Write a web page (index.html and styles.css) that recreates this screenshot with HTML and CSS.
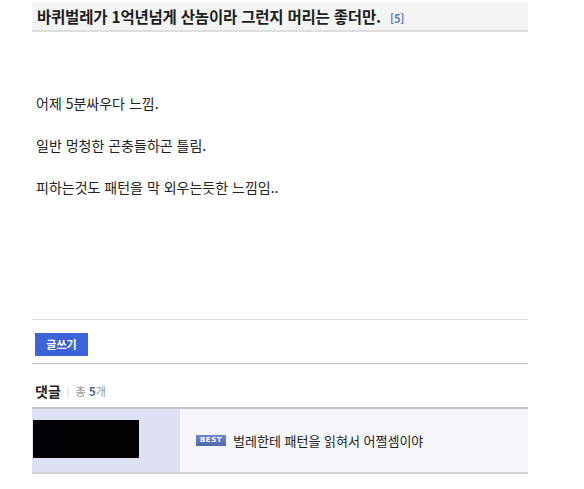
FILE: index.html
```html
<!DOCTYPE html>
<html lang="ko">
<head>
<meta charset="utf-8">
<link rel="stylesheet" href="styles.css">
</head>
<body>
<div class="wrap">
  <div class="title">바퀴벌레가 1억년넘게 산놈이라 그런지 머리는 좋더만. <span class="cnt">[5]</span></div>
  <div class="content">
    <p>어제 5분싸우다 느낌.</p>
    <p>일반 멍청한 곤충들하곤 틀림.</p>
    <p>피하는것도 패턴을 막 외우는듯한 느낌임..</p>
  </div>
  <div class="btnrow"><span class="btn">글쓰기</span></div>
  <div class="chead"><span class="clabel">댓글</span><span class="sep">|</span><span class="total">총 <b>5</b>개</span></div>
  <div class="comment">
    <div class="cleft"><div class="redact"></div></div>
    <div class="cright"><span class="best">BEST</span><span class="ctext">벌레한테 패턴을 읽혀서 어쩔셈이야</span></div>
  </div>
</div>
</body>
</html>
```
FILE: styles.css
```css
html, body {
  margin: 0;
  padding: 0;
  background: #fff;
}
body {
  font-family: "Noto Sans CJK KR", "Noto Sans", sans-serif;
  color: #222;
}
.wrap {
  width: 496px;
  margin-left: 32px;
  padding-top: 2px;
}
.title {
  height: 28px;
  line-height: 28px;
  background: #f3f4f4;
  border-bottom: 2px solid #dedede;
  padding-left: 5px;
  font-size: 15.5px;
  font-weight: bold;
  color: #1e1e1e;
  letter-spacing: -0.2px;
}
.cnt {
  font-size: 11px;
  color: #5a7db0;
  margin-left: 5px;
}
.content {
  height: 288px;
  box-sizing: border-box;
  padding: 63px 0 0 4px;
  border-bottom: 1px solid #dcdcdc;
  display: flex;
  flex-direction: column;
  gap: 26px;
}
.content p {
  margin: 0;
  font-size: 14px;
  line-height: 16px;
  color: #222;
}
.btnrow {
  height: 44px;
  box-sizing: border-box;
  padding: 10px 0 0 3px;
  border-bottom: 1px solid #b9b9b9;
}
.btn {
  display: inline-block;
  width: 53px;
  height: 23px;
  line-height: 23px;
  text-align: center;
  background: #3c64d8;
  color: #fff;
  font-size: 11px;
  font-weight: bold;
}
.chead {
  height: 43px;
  box-sizing: border-box;
  padding: 19px 0 0 3px;
  display: flex;
  align-items: flex-start;
  gap: 6px;
}
.clabel {
  font-size: 14px;
  font-weight: bold;
  color: #222;
  line-height: 16px;
}
.sep {
  font-size: 10px;
  color: #d0d0d0;
  line-height: 16px;
}
.total {
  font-size: 11px;
  color: #999;
  line-height: 16px;
}
.total b {
  color: #4d6b8c;
  font-size: 12px;
}
.comment {
  display: flex;
  height: 67px;
  box-sizing: border-box;
  border-top: 2px solid #c4c4c4;
  border-bottom: 2px solid #d4d4d4;
}
.cleft {
  width: 148px;
  background: #dee1f3;
  padding: 11px 0 0 1px;
  box-sizing: border-box;
}
.redact {
  width: 106px;
  height: 38px;
  background: #020204;
}
.cright {
  flex: 1;
  background: #f5f7fd;
  display: flex;
  align-items: center;
  padding-left: 16px;
  gap: 7px;
}
.best {
  display: inline-block;
  width: 30px;
  height: 11px;
  line-height: 11px;
  background: linear-gradient(#7088cc, #4d66b0);
  color: #fff;
  font-family: "DejaVu Sans", sans-serif;
  font-size: 7px;
  font-weight: bold;
  text-align: center;
  letter-spacing: 0.5px;
}
.ctext {
  font-size: 13px;
  color: #222;
}
```
